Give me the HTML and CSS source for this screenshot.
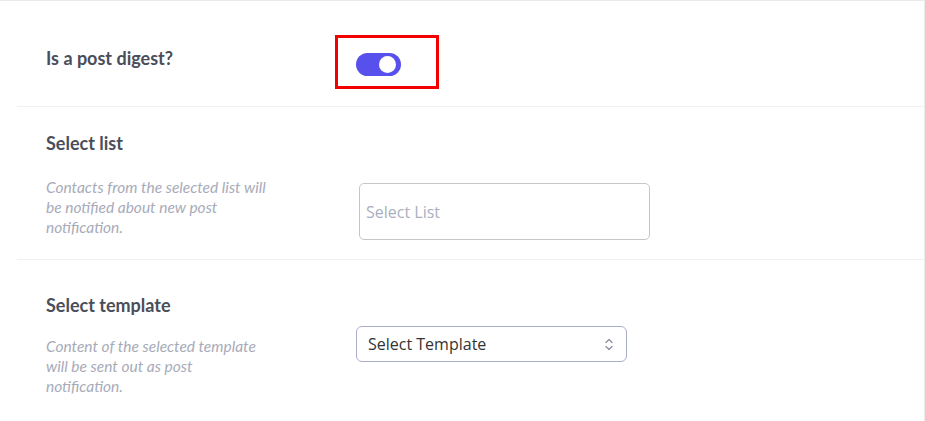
FILE: index.html
```html
<!DOCTYPE html>
<html>
<head>
<meta charset="utf-8">
<link rel="stylesheet" href="styles.css">
</head>
<body>
<div class="panel">
  <div class="row row-digest">
    <div class="label-col">
      <div class="title title-digest">Is a post digest?</div>
    </div>
    <div class="highlight">
      <div class="toggle"><span class="knob"></span></div>
    </div>
  </div>
  <div class="row row-list">
    <div class="label-col wide">
      <div class="title">Select list</div>
      <p class="desc desc-list">Contacts from the selected list will be notified about new post notification.</p>
    </div>
    <div class="input-box">Select List</div>
  </div>
  <div class="row row-template">
    <div class="label-col mid">
      <div class="title">Select template</div>
      <p class="desc desc-template">Content of the selected template will be sent out as post notification.</p>
    </div>
    <div class="select-box">
      <span>Select Template</span>
      <svg class="chev" width="10" height="15" viewBox="0 0 10 15"><path d="M2 5.5 L5 2.5 L8 5.5 M2 9.5 L5 12.5 L8 9.5" fill="none" stroke="#8e93a3" stroke-width="1.4" stroke-linecap="round" stroke-linejoin="round"/></svg>
    </div>
  </div>
</div>
</body>
</html>
```
FILE: styles.css
```css
* { box-sizing: border-box; }
html, body { margin: 0; padding: 0; background: #fff; }
body { width: 925px; height: 421px; overflow: hidden; font-family: "Lato", "Open Sans", sans-serif; }

.panel {
  width: 925px;
  height: 421px;
  border-top: 1px solid #ebebeb;
  border-right: 1px solid #ebebeb;
}

.row {
  display: flex;
  align-items: flex-start;
  margin-left: 17px;
  padding-left: 29px;
  border-bottom: 1px solid #f1f1f1;
}
.row-digest { padding-top: 34px; height: 106px; }
.row-list { padding-top: 24px; height: 153px; }
.row-template { padding-top: 33px; border-bottom: none; }

.label-col { width: 289px; flex: none; }
.label-col.wide { width: 313px; }
.label-col.mid { width: 310px; }

.title {
  font-size: 18px;
  line-height: 24px;
  font-weight: 700;
  color: #4a4e5a;
}
.title-digest { margin-top: 11px; }

.desc {
  margin: 0;
  width: 226px;
  font-size: 15.5px;
  line-height: 20px;
  font-style: italic;
  color: #a7abb9;
}
.desc-list { margin-top: 22px; }
.desc-template { margin-top: 19px; }

.highlight {
  width: 104px;
  height: 54px;
  border: 3px solid #f20000;
  padding: 15px 0 0 18px;
}
.toggle {
  position: relative;
  width: 45px;
  height: 23px;
  border-radius: 12px;
  background: #5850ec;
}
.knob {
  position: absolute;
  right: 5px;
  top: 3px;
  width: 17px;
  height: 17px;
  border-radius: 50%;
  background: #fff;
}

.input-box {
  margin-top: 52px;
  width: 291px;
  height: 57px;
  border: 1px solid #c6c6c9;
  border-radius: 5px;
  padding-left: 6px;
  display: flex;
  align-items: center;
  font-family: "Open Sans", sans-serif;
  font-size: 16px;
  color: #aab0be;
}

.select-box {
  margin-top: 33px;
  width: 271px;
  height: 36px;
  border: 1px solid #a9aec6;
  border-radius: 6px;
  padding: 0 12px 0 11px;
  display: flex;
  align-items: center;
  justify-content: space-between;
  font-family: "Open Sans", sans-serif;
  font-size: 16px;
  color: #333;
}
.chev { display: block; }
```
